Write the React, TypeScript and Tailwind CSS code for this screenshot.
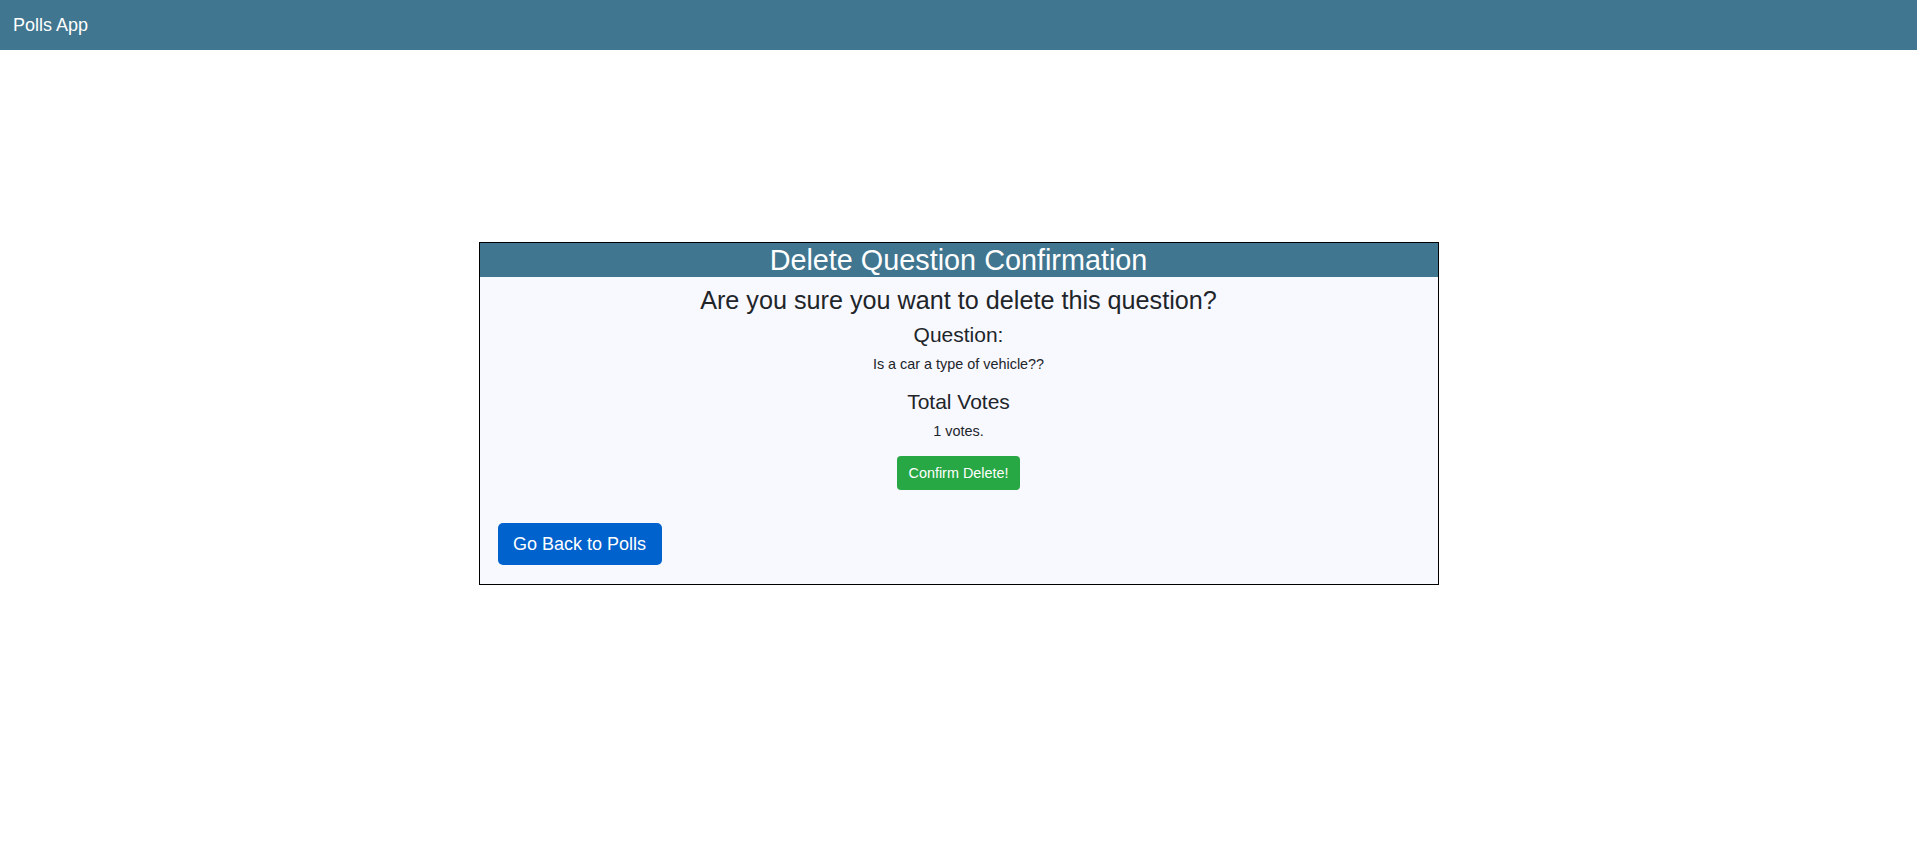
import React from "react";

export default function App() {
  return (
    <div
      className="min-h-[852px] bg-white text-[#212529]"
      style={{ fontFamily: '"Liberation Sans", Arial, Helvetica, sans-serif' }}
    >
      <nav className="h-[50px] bg-[#417690] flex items-center pl-[13px]">
        <span className="text-white text-[18px] leading-none">Polls App</span>
      </nav>

      <div className="mt-[192px] mx-auto w-[960px] border border-black bg-[#f8f8ff]">
        <div className="bg-[#417690] h-[34px] flex items-center justify-center pt-[1px]">
          <h3 className="text-white text-[28.8px] leading-[33px] m-0">Delete Question Confirmation</h3>
        </div>
        <div className="pt-[8px] pb-[19px] flex flex-col">
          <h4 className="text-center text-[25.2px] leading-[30px] mb-[7px]">
            Are you sure you want to delete this question?
          </h4>
          <h5 className="text-center text-[21px] leading-[25.2px] mb-[7px]">Question:</h5>
          <p className="text-center text-[14.4px] leading-[21px] mb-[14px]">Is a car a type of vehicle??</p>
          <h5 className="text-center text-[21px] leading-[25.2px] mb-[7px]">Total Votes</h5>
          <p className="text-center text-[14.4px] leading-[21px] mb-[14px]">1 votes.</p>
          <div className="flex justify-center">
            <button className="w-[123px] h-[34px] rounded-[4px] bg-[#28a745] text-white text-[14.4px] flex items-center justify-center">
              Confirm Delete!
            </button>
          </div>
          <div className="mt-[33px] pl-[18px]">
            <button className="w-[164px] h-[42px] rounded-[5px] bg-[#0062cc] text-white text-[18px] flex items-center justify-center">
              Go Back to Polls
            </button>
          </div>
        </div>
      </div>
    </div>
  );
}
